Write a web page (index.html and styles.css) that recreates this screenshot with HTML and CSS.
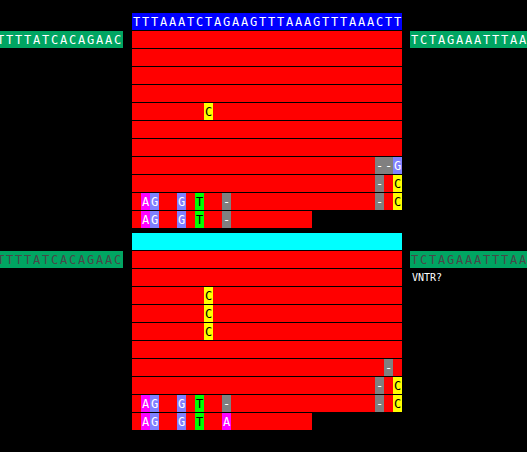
FILE: index.html
```html
<!DOCTYPE html>
<html lang="en">
<head>
  <meta charset="UTF-8" />
  <title>Alignment</title>
  <link rel="stylesheet" href="styles.css">
</head>

<body>
  <div class="line">
    <div class="flank"></div>
    <div class="read consensus">
      <b>T</b><b>T</b><b>T</b><b>A</b><b>A</b><b>A</b><b>T</b><b>C</b><b>T</b><b>A</b><b>G</b><b>A</b><b>A</b><b>G</b><b>T</b><b>T</b><b>T</b><b>A</b><b>A</b><b>A</b><b>G</b><b>T</b><b>T</b><b>T</b><b>A</b><b>A</b><b>A</b><b>C</b><b>T</b><b>T</b>
    </div>
  </div>

  <!-- top group -->
  <div class="line">
    <div class="flank left">TTTTATCACAGAAC</div>
    <div class="read"></div>
    <div class="flank right">TCTAGAAATTTAA</div>
  </div>
  <div class="line"><div class="flank"></div><div class="read"></div></div>
  <div class="line"><div class="flank"></div><div class="read"></div></div>
  <div class="line"><div class="flank"></div><div class="read"></div></div>
  <div class="line"><div class="flank"></div><div class="read"><b class="c8 yellow">C</b></div></div>
  <div class="line"><div class="flank"></div><div class="read"></div></div>
  <div class="line"><div class="flank"></div><div class="read"></div></div>
  <div class="line"><div class="flank"></div><div class="read"><b class="c27 grey">-</b><b class="c28 grey">-</b><b class="c29 blue">G</b></div></div>
  <div class="line"><div class="flank"></div><div class="read"><b class="c27 grey">-</b><b class="c29 yellow">C</b></div></div>
  <div class="line"><div class="flank"></div><div class="read"><b class="c1 pink">A</b><b class="c2 blue">G</b><b class="c5 blue">G</b><b class="c7 green">T</b><b class="c10 grey">-</b><b class="c27 grey">-</b><b class="c29 yellow">C</b></div></div>
  <div class="line"><div class="flank"></div><div class="read short"><b class="c1 pink">A</b><b class="c2 blue">G</b><b class="c5 blue">G</b><b class="c7 green">T</b><b class="c10 grey">-</b></div></div>

  <div class="line divider"><div class="flank"></div><div class="read cyan"></div></div>

  <!-- bottom group -->
  <div class="line">
    <div class="flank left dim">TTTTATCACAGAAC</div>
    <div class="read"></div>
    <div class="flank right dim">TCTAGAAATTTAA</div>
  </div>
  <div class="line">
    <div class="flank"></div>
    <div class="read"></div>
    <div class="note">VNTR?</div>
  </div>
  <div class="line"><div class="flank"></div><div class="read"><b class="c8 yellow">C</b></div></div>
  <div class="line"><div class="flank"></div><div class="read"><b class="c8 yellow">C</b></div></div>
  <div class="line"><div class="flank"></div><div class="read"><b class="c8 yellow">C</b></div></div>
  <div class="line"><div class="flank"></div><div class="read"></div></div>
  <div class="line"><div class="flank"></div><div class="read"><b class="c28 grey">-</b></div></div>
  <div class="line"><div class="flank"></div><div class="read"><b class="c27 grey">-</b><b class="c29 yellow">C</b></div></div>
  <div class="line"><div class="flank"></div><div class="read"><b class="c1 pink">A</b><b class="c2 blue">G</b><b class="c5 blue">G</b><b class="c7 green">T</b><b class="c10 grey">-</b><b class="c27 grey">-</b><b class="c29 yellow">C</b></div></div>
  <div class="line"><div class="flank"></div><div class="read short"><b class="c1 pink">A</b><b class="c2 blue">G</b><b class="c5 blue">G</b><b class="c7 green">T</b><b class="c10 pink">A</b></div></div>
</body>
</html>
```

FILE: styles.css
```css
html, body {
  margin: 0;
  height: 100%;
  overflow: hidden;
  background: #000;
}

body {
  padding-top: 13px;
  box-sizing: border-box;
  font-family: "DejaVu Sans Mono", monospace;
  font-size: 12px;
  color: #fff;
}

.line {
  display: flex;
  height: 17px;
  margin-bottom: 1px;
  line-height: 18px;
}

.divider {
  margin-top: 5px;
}

.flank {
  flex: none;
  width: 123px;
  margin-right: 9px;
}

.flank.left,
.flank.right {
  display: flex;
  background: #00a562;
  letter-spacing: 1.78px;
  white-space: nowrap;
  overflow: hidden;
}

.flank.left {
  justify-content: flex-end;
}

.flank.right {
  width: 117px;
  margin: 0 0 0 8px;
  padding-left: 1px;
  box-sizing: border-box;
}

.flank.dim {
  color: #484848;
}

.note {
  margin-left: 10px;
  font-size: 10px;
}

.read {
  flex: none;
  display: grid;
  grid-template-columns: repeat(30, 9px);
  grid-template-rows: 17px;
  width: 270px;
  background: #f00;
}

.read.short {
  width: 180px;
  grid-template-columns: repeat(20, 9px);
}

.read b {
  font-weight: normal;
  text-align: center;
  color: #fff;
}

.consensus {
  background: #00f;
}

.read.cyan {
  background: #0ff;
}

.c1 { grid-column: 2; }
.c2 { grid-column: 3; }
.c5 { grid-column: 6; }
.c7 { grid-column: 8; }
.c8 { grid-column: 9; }
.c10 { grid-column: 11; }
.c27 { grid-column: 28; }
.c28 { grid-column: 29; }
.c29 { grid-column: 30; }

.read .yellow { background: #ff0; color: #000; }
.read .green { background: #0f0; color: #000; }
.read .grey { background: #808080; }
.read .blue { background: #8080ff; }
.read .pink { background: #f0f; }
```
